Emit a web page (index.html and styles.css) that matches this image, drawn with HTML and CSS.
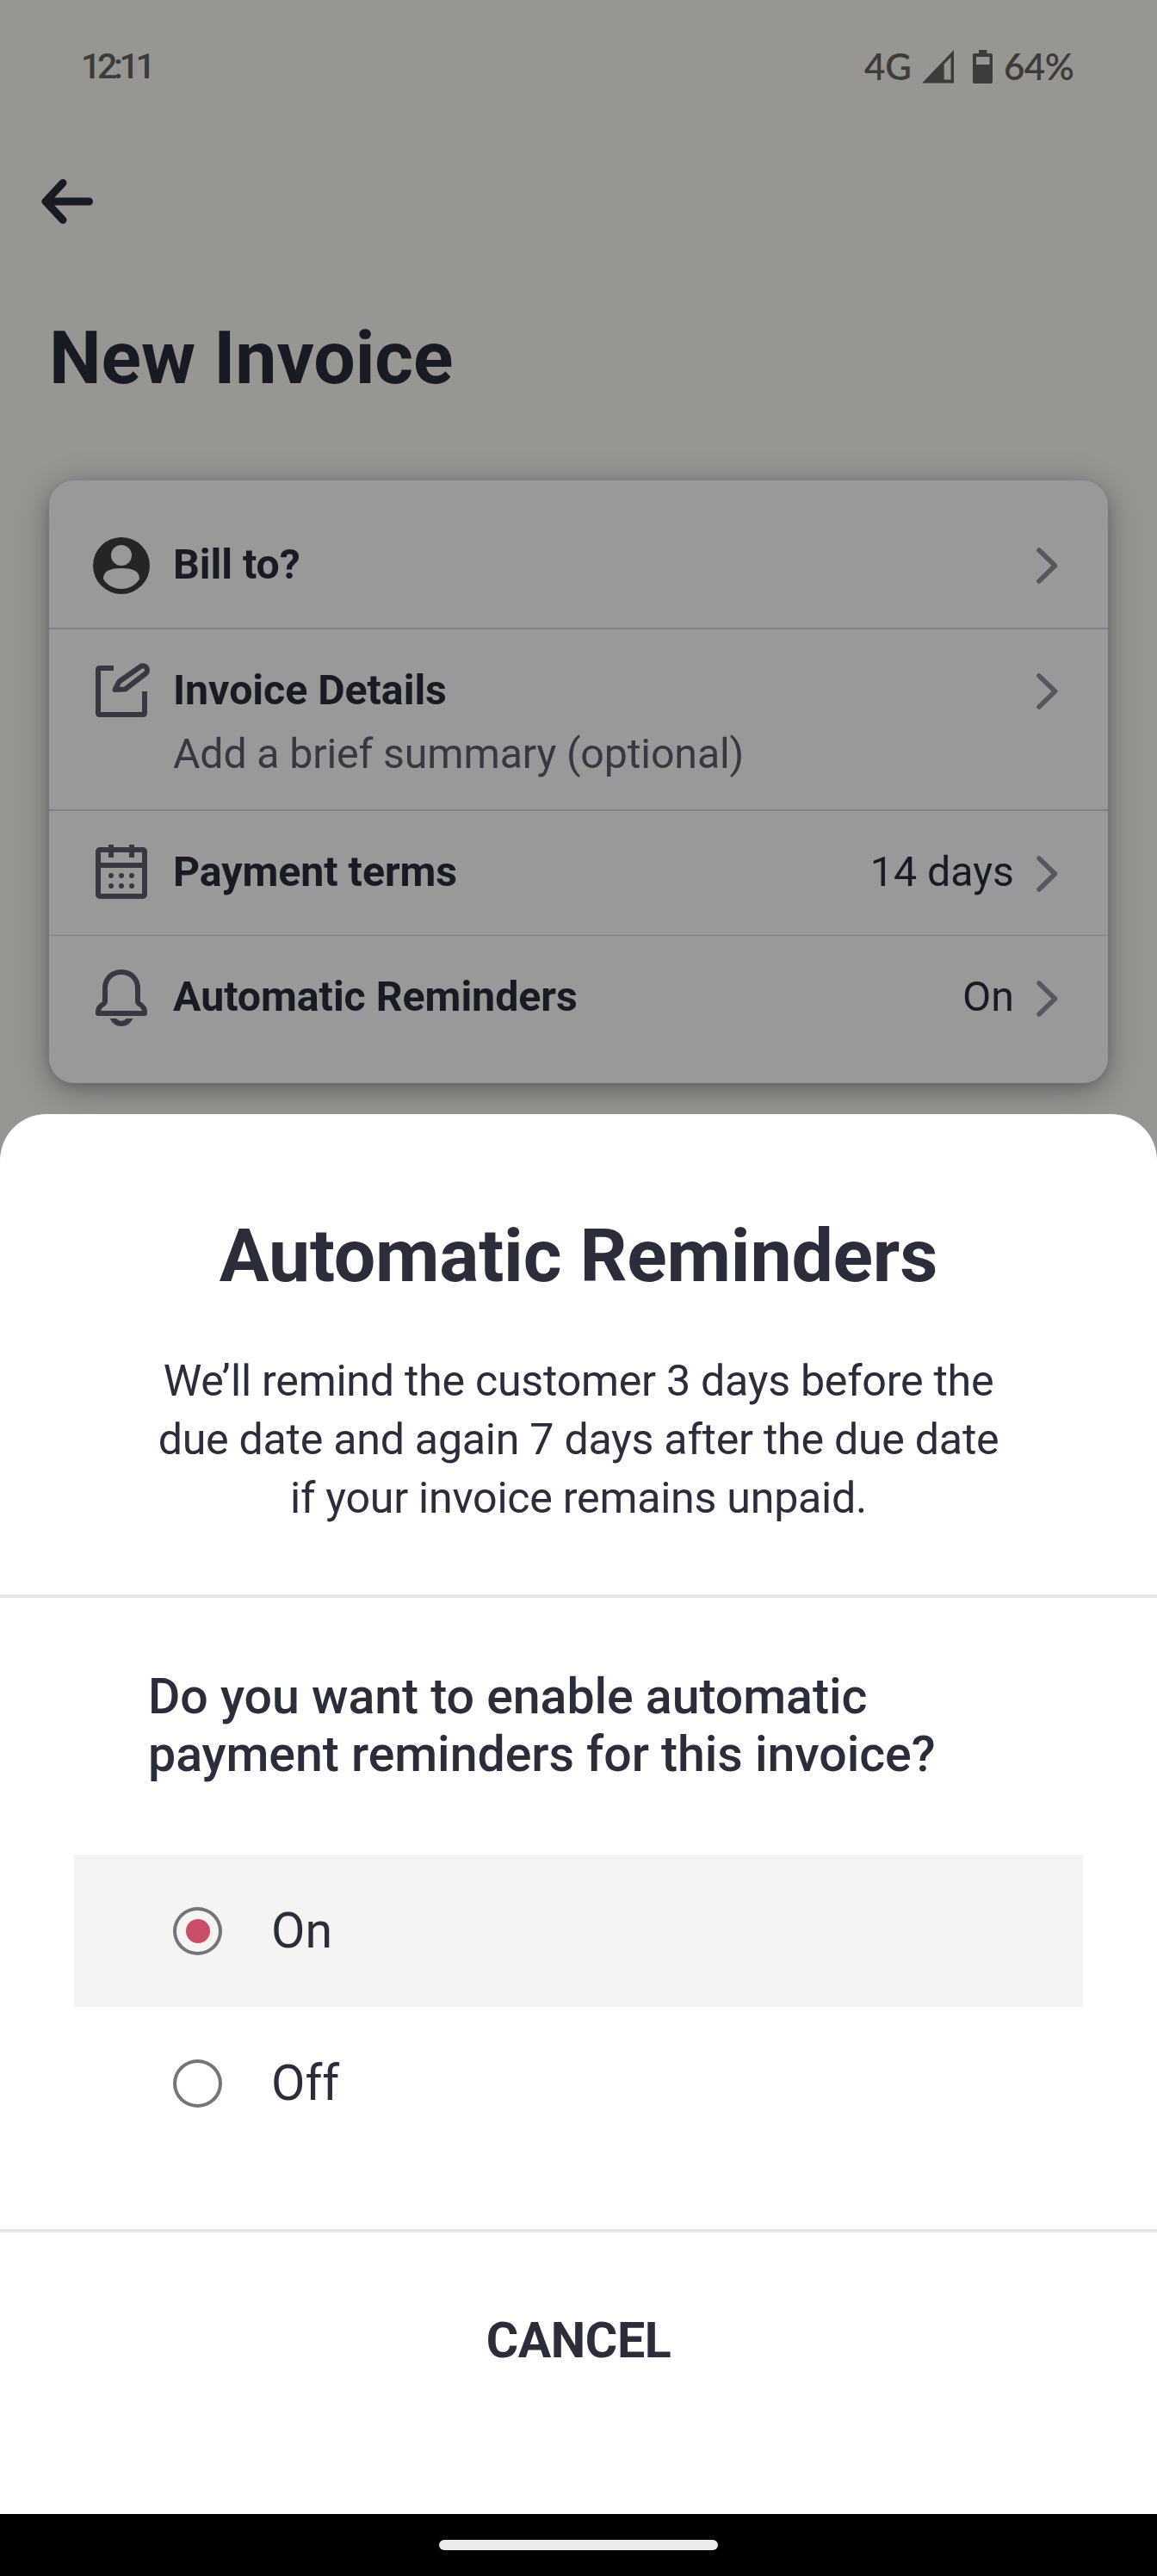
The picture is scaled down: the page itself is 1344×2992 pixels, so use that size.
FILE: index.html
```html
<!DOCTYPE html>
<html lang="en">
<head>
<meta charset="utf-8">
<title>New Invoice</title>
<link rel="stylesheet" href="styles.css">
</head>
<body>
<div class="screen">
  <header class="status">
    <span class="clock">12:11</span>
    <div class="status-right">
      <span class="network">4G</span>
      <svg class="signal" width="37" height="39" viewBox="0 0 37 39"><path fill="currentColor" fill-rule="evenodd" d="M37 0V38.500H0ZM25.700 16.500V34.500H33.500V8.500Z"/></svg>
      <svg class="battery" width="23" height="39" viewBox="0 0 23 39"><path fill="currentColor" fill-rule="evenodd" d="M7 0H16.500V4H21Q23 4 23 6V37Q23 39 21 39H2Q0 39 0 37V6Q0 4 2 4H7ZM4 8V17H19.500V8Z"/></svg>
      <span class="percent">64%</span>
    </div>
  </header>
  <nav class="nav">
    <svg width="60" height="52" viewBox="0 0 60 52" fill="none" stroke="currentColor" stroke-width="9" stroke-linecap="round" stroke-linejoin="round"><path d="M55.500 26H5M25 4.500L5 26L25 47.500"/></svg>
  </nav>
  <h1 class="page-title">New Invoice</h1>

  <section class="card">
    <div class="row row-bill">
      <div class="row-head">
        <svg class="icon icon-user" viewBox="0 0 66 66"><path fill="currentColor" fill-rule="evenodd" d="M33 0A33 33 0 1 1 33 66A33 33 0 1 1 33 0ZM33 9A12 12 0 1 0 33 33A12 12 0 1 0 33 9ZM33 36C20 36 12 39 12 48.500C17 56 24 60 33 60C42 60 49 56 54 48.500C54 39 46 36 33 36Z"/></svg>
        <span class="label">Bill to?</span>
        <svg class="chevron" viewBox="0 0 25 42"><path d="M3 3L21.500 21L3 39"/></svg>
      </div>
    </div>
    <div class="row row-details">
      <div class="row-head">
        <svg class="icon line" viewBox="0 0 66 66"><path d="M24 6H8Q6 6 6 8V58Q6 60 8 60H58Q60 60 60 58V33"/><path d="M25.500 31L30.500 21.500L54.500 4.700A4.900 4.900 0 0 1 61.500 12L37.500 30.500Z" stroke-linejoin="round"/></svg>
        <span class="label">Invoice Details</span>
        <svg class="chevron" viewBox="0 0 25 42"><path d="M3 3L21.500 21L3 39"/></svg>
      </div>
      <p class="summary">Add a brief summary (optional)</p>
    </div>
    <div class="row row-terms">
      <div class="row-head">
        <svg class="icon line" viewBox="0 0 66 66"><rect x="6" y="5" width="54" height="54" rx="2"/><path d="M21 -1V14M45 -1V14M6 23H60"/><g class="dots"><circle cx="21" cy="35" r="3"/><circle cx="33" cy="35" r="3"/><circle cx="45" cy="35" r="3"/><circle cx="21" cy="47" r="3"/><circle cx="33" cy="47" r="3"/><circle cx="45" cy="47" r="3"/></g></svg>
        <span class="label">Payment terms</span>
        <span class="value">14 days</span>
        <svg class="chevron" viewBox="0 0 25 42"><path d="M3 3L21.500 21L3 39"/></svg>
      </div>
    </div>
    <div class="row row-reminders">
      <div class="row-head">
        <svg class="icon line" viewBox="0 0 66 66"><path stroke-linejoin="round" d="M33 2C21 2 14 11 14 21V36Q14 38 11.500 39.500Q6 43 6 48V50H60V48Q60 43 54.500 39.500Q52 38 52 36V21C52 11 45 2 33 2Z"/><path class="clapper" d="M19.500 56H27Q33 62 39 56H46.500Q42 65 33 65Q24 65 19.500 56Z"/></svg>
        <span class="label">Automatic Reminders</span>
        <span class="value">On</span>
        <svg class="chevron" viewBox="0 0 25 42"><path d="M3 3L21.500 21L3 39"/></svg>
      </div>
    </div>
  </section>

  <main class="sheet">
    <div class="intro">
      <h2 class="sheet-title">Automatic Reminders</h2>
      <p class="description">We’ll remind the customer 3 days before the<br>due date and again 7 days after the due date<br>if your invoice remains unpaid.</p>
    </div>
    <div class="choices">
      <p class="question">Do you want to enable automatic<br>payment reminders for this invoice?</p>
      <div class="option selected"><span class="radio"></span><span>On</span></div>
      <div class="option"><span class="radio"></span><span>Off</span></div>
    </div>
    <button class="cancel">CANCEL</button>
  </main>
  <footer class="gesture-bar"><span class="handle"></span></footer>
</div>
</body>
</html>
```
FILE: styles.css
```css
* { box-sizing: border-box; }
body { margin: 0; }
h1, h2, p { margin: 0; }
svg { display: block; flex: none; overflow: visible; }

.screen {
  width: 1344px;
  height: 2992px;
  display: flex;
  flex-direction: column;
  background: #979693;
  color: #181b23;
  font-family: Roboto, sans-serif;
  overflow: hidden;
}

/* Status bar */
.status {
  height: 154px;
  padding: 0 96px 0 94px;
  display: flex;
  justify-content: space-between;
  align-items: center;
  color: #3c3c3b;
  font-size: 41px;
  font-weight: 500;
}
.clock { letter-spacing: -4.3px; }
.status-right { display: flex; align-items: center; }
.network, .percent { font-family: Lato, sans-serif; font-size: 42px; font-weight: 600; }
.network { width: 67px; }
.signal { margin-right: 22px; }
.battery { margin-right: 13px; }
.percent { width: 82px; letter-spacing: -0.5px; }

/* Page header */
.nav { height: 160px; padding: 54px 0 0 48px; }
.page-title {
  height: 244px;
  padding: 52px 0 0 57px;
  font-size: 86px;
  line-height: 100px;
  font-weight: 700;
  letter-spacing: -0.1px;
}

/* Invoice card */
.card {
  flex: none;
  height: 700px;
  margin: 0 57px;
  border-radius: 29px;
  background: #999;
  box-shadow: 0 8px 42px rgba(0, 0, 0, .32), 0 4px 12px rgba(0, 0, 0, .13);
}
.row { border-bottom: 2px solid #808087; }
.row-bill { height: 173px; padding-top: 66px; }
.row-details { height: 211px; padding-top: 39px; }
.row-terms { height: 145px; padding-top: 40px; border-bottom-width: 1px; }
.row-reminders { height: 171px; padding-top: 40px; border-bottom: 0; }
.row-head {
  height: 66px;
  padding: 0 58px 0 51px;
  display: flex;
  align-items: center;
}
.icon { width: 66px; height: 66px; color: #383843; }
.icon-user { color: #252523; }
.line { fill: none; stroke: currentColor; stroke-width: 6; }
.dots, .clapper { fill: currentColor; stroke: none; }
.label {
  flex: 1;
  margin-left: 27px;
  padding-bottom: 3px;
  font-size: 48.3px;
  font-weight: 700;
  letter-spacing: -0.05px;
}
.row-terms .label, .row-reminders .label,
.row-terms .value, .row-reminders .value { padding-bottom: 5px; }
.value { margin-right: 26px; font-size: 48.3px; }
.chevron {
  width: 25px;
  height: 42px;
  fill: none;
  stroke: #57575f;
  stroke-width: 5.6;
  stroke-linecap: round;
  stroke-linejoin: round;
}
.summary {
  margin: 10px 0 0 144px;
  font-size: 48.3px;
  line-height: 60px;
  letter-spacing: -0.15px;
  color: #383843;
}

/* Bottom sheet */
.sheet {
  flex: none;
  height: 1626px;
  margin-top: 36px;
  border-radius: 54px 54px 0 0;
  background: #fff;
  color: #2c2d3b;
}
.intro {
  height: 562px;
  padding-top: 115px;
  border-bottom: 4px solid #e5e6e6;
  text-align: center;
}
.sheet-title {
  font-size: 86px;
  line-height: 100px;
  font-weight: 700;
  letter-spacing: -0.2px;
}
.description {
  margin-top: 61px;
  font-size: 50.2px;
  line-height: 68.2px;
  letter-spacing: -0.28px;
}
.choices {
  height: 737px;
  padding: 81px 86px 0;
  border-bottom: 4px solid #e5e6e6;
  font-size: 57.3px;
}
.question {
  height: 217px;
  padding-left: 86px;
  line-height: 67.2px;
  font-weight: 500;
  letter-spacing: -0.07px;
}
.option {
  height: 177px;
  padding-left: 115px;
  display: flex;
  align-items: center;
  gap: 57px;
}
.selected { background: #f5f4f3; }
.radio {
  width: 57px;
  height: 56px;
  border: 4px solid #747579;
  border-radius: 50%;
  display: flex;
  align-items: center;
  justify-content: center;
}
.selected .radio::after {
  content: "";
  width: 28px;
  height: 28px;
  border-radius: 50%;
  background: #c94f68;
}
.cancel {
  display: block;
  width: 100%;
  height: 251px;
  padding: 0;
  border: 0;
  background: none;
  color: inherit;
  font: 700 57.3px Roboto, sans-serif;
  letter-spacing: -0.4px;
}

/* System gesture bar */
.gesture-bar {
  height: 72px;
  background: #000;
  display: flex;
  justify-content: center;
  align-items: center;
}
.handle { width: 324px; height: 12px; border-radius: 6px; background: #ebebeb; }
```
